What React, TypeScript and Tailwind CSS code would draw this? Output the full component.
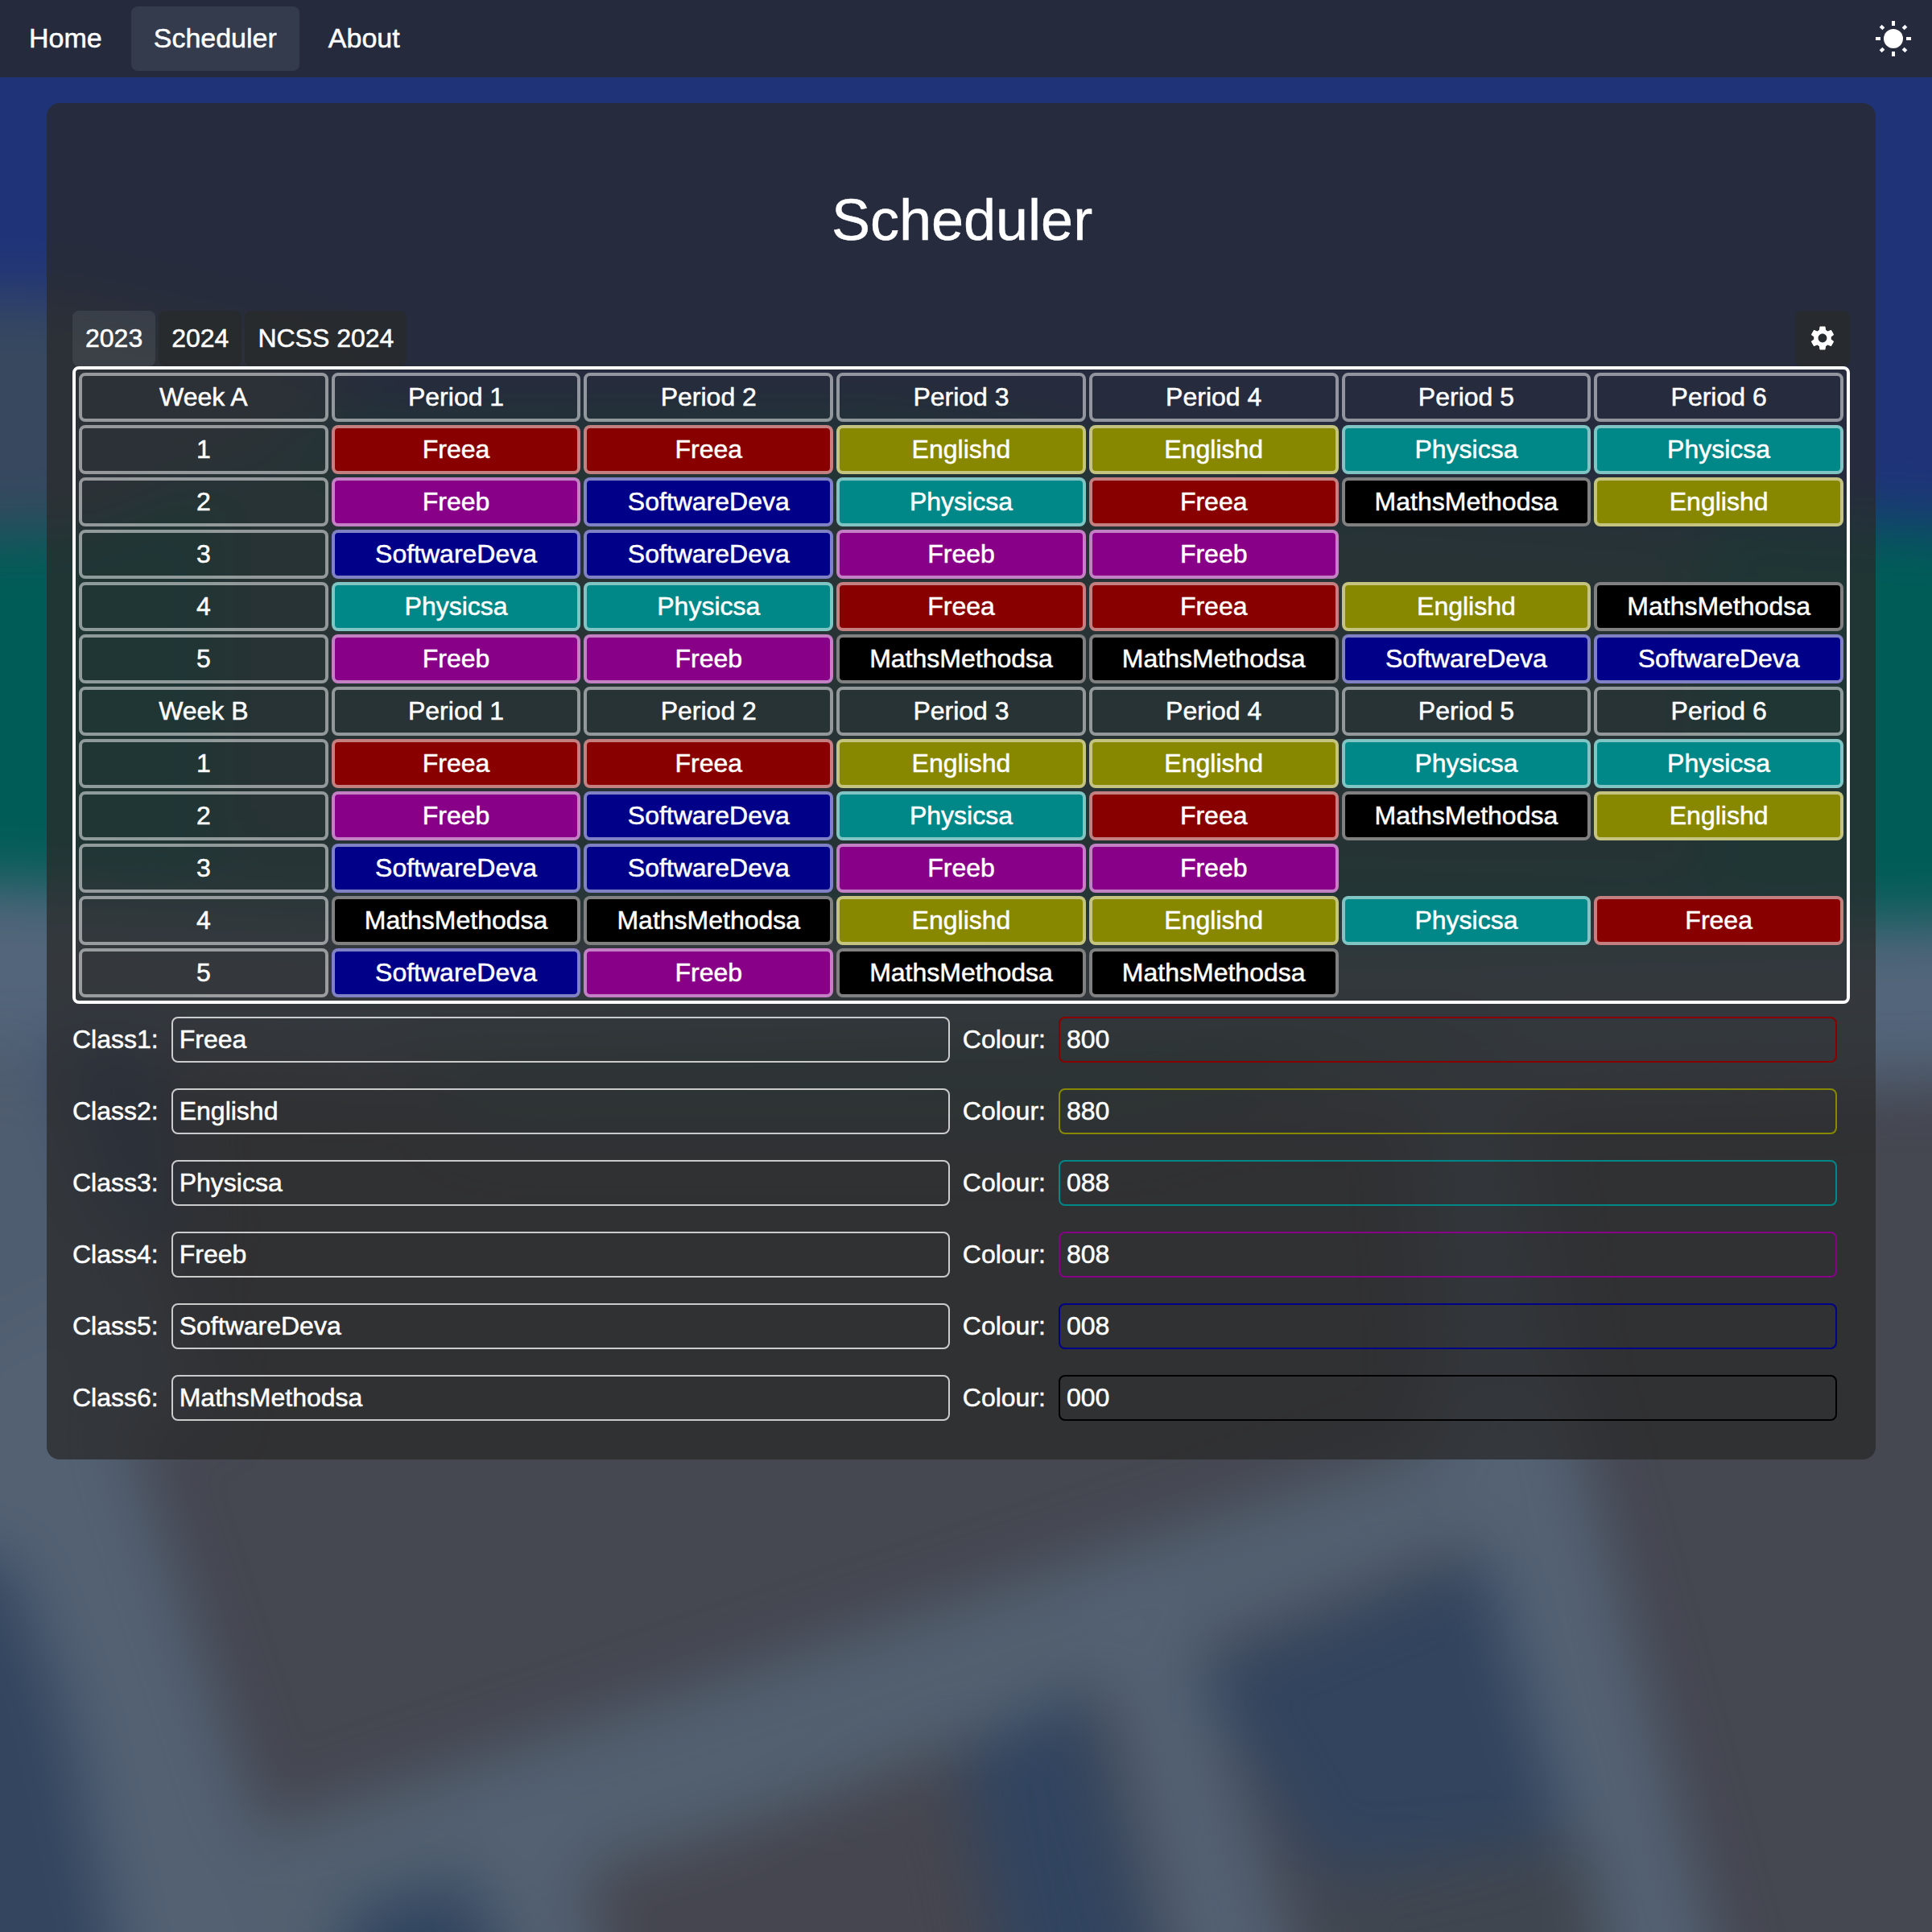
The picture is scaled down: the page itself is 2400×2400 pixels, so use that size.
import React from "react";
import { MdSettings } from "react-icons/md";

const subjects: Record<string, { name: string; fill: string; outline: string }> = {
  F: { name: "Freea", fill: "bg-[#880000]", outline: "border-[#880000]" },
  E: { name: "Englishd", fill: "bg-[#888800]", outline: "border-[#888800]" },
  P: { name: "Physicsa", fill: "bg-[#008888]", outline: "border-[#008888]" },
  B: { name: "Freeb", fill: "bg-[#880088]", outline: "border-[#880088]" },
  S: { name: "SoftwareDeva", fill: "bg-[#000088]", outline: "border-[#000088]" },
  M: { name: "MathsMethodsa", fill: "bg-[#000000]", outline: "border-[#000000]" },
};

const weeks = [
  { label: "Week A", days: ["FFEEPP", "BSPFME", "SSBB--", "PPFFEM", "BBMMSS"] },
  { label: "Week B", days: ["FFEEPP", "BSPFME", "SSBB--", "MMEEPF", "SBMM--"] },
];

const classes = [
  { key: "F", colour: "800" },
  { key: "E", colour: "880" },
  { key: "P", colour: "088" },
  { key: "B", colour: "808" },
  { key: "S", colour: "008" },
  { key: "M", colour: "000" },
];

function Backdrop() {
  return (
    <svg className="absolute inset-0 -z-10 h-full w-full" viewBox="0 0 2400 2400" preserveAspectRatio="none" aria-hidden="true">
      <defs>
        <filter id="soft" x="-400" y="-400" width="3200" height="3200" filterUnits="userSpaceOnUse" colorInterpolationFilters="sRGB">
          <feGaussianBlur stdDeviation="38" />
        </filter>
      </defs>
      <rect width="2400" height="2400" fill="#454751" />
      <g filter="url(#soft)">
        <path d="M-200 -200H2600V800H-200Z" fill="#1f3379" />
        <path d="M-200 370L60 365L420 440L420 760H-200Z" fill="#37485f" />
        <path d="M-200 1000H1300L2600 1080V1335L1300 1370L-200 1300Z" fill="#53657a" />
        <path d="M-200 670L120 660L420 520L1100 520L1700 610L2600 665V1140L1500 1160L-200 1090Z" fill="#005c57" />
        <path d="M260 560L2120 640L2120 1100L260 1080Z" fill="#22505a" />
        <path d="M500 1300L1900 1260L1400 1400L600 1400Z" fill="#3a5458" />
        <path d="M-200 1310L100 1320L260 1760L60 1760L-200 1700Z" fill="#4f5d70" />
        <path d="M70 1290L200 1300L240 1560L130 1500Z" fill="#33476a" />
        <path d="M-200 1680L-20 1700L0 1790L-200 1790Z" fill="#3a506a" />
        <path d="M1750 1300H1870L1960 1830L1800 1860Z" fill="#4c5b6b" />
        <path d="M-200 1780L100 1600L310 2240L420 2500H-200Z" fill="#536173" />
        <path d="M260 2295L1820 1780L1900 1895L330 2500Z" fill="#526070" />
        <path d="M590 2230L710 2220L790 2500H640Z" fill="#536173" />
        <path d="M1340 1970L1460 1960L1630 2500H1470Z" fill="#536173" />
        <path d="M1770 1730L1945 1730L2150 2500H2000Z" fill="#546274" />
        <path d="M-200 1900L10 1940L80 2120L160 2500H-200Z" fill="#33455f" />
        <path d="M430 2375L580 2335L640 2500H430Z" fill="#30445f" />
        <path d="M720 2330L1180 2190L1240 2500H770Z" fill="#45464f" />
        <path d="M1195 2180L1345 2100L1450 2500H1260Z" fill="#31445f" />
        <path d="M1490 2075L1845 1935L1950 2290L1640 2330Z" fill="#32445e" />
        <path d="M1640 2340L1970 2290L2010 2500H1660Z" fill="#40464f" />
      </g>
    </svg>
  );
}

function SunIcon() {
  return (
    <svg className="h-12 w-12" viewBox="-24 -24 48 48" fill="white" aria-hidden="true">
      <circle r="12" />
      {[0, 90, 180, 270].map((a) => (
        <rect key={a} x="-2" y="-22" width="4" height="6" transform={`rotate(${a})`} />
      ))}
      {[45, 135, 225, 315].map((a) => (
        <rect key={a} x="-2.1" y="-22.4" width="4.2" height="5.2" transform={`rotate(${a})`} />
      ))}
    </svg>
  );
}

function Cell({ children, fill = "" }: { children: React.ReactNode; fill?: string }) {
  return (
    <div className={`h-[61px] rounded-lg border-4 border-white/50 py-2 text-center ${fill}`}>{children}</div>
  );
}

function Timetable() {
  return (
    <div className="grid grid-cols-7 gap-1 rounded-lg border-4 border-white p-1">
      {weeks.map((week) => (
        <React.Fragment key={week.label}>
          <Cell>{week.label}</Cell>
          {[1, 2, 3, 4, 5, 6].map((p) => (
            <Cell key={p}>Period {p}</Cell>
          ))}
          {week.days.map((day, d) => (
            <React.Fragment key={d}>
              <Cell>{d + 1}</Cell>
              {day.split("").map((code, i) =>
                subjects[code] ? (
                  <Cell key={i} fill={subjects[code].fill}>
                    {subjects[code].name}
                  </Cell>
                ) : (
                  <div key={i} />
                ),
              )}
            </React.Fragment>
          ))}
        </React.Fragment>
      ))}
    </div>
  );
}

function Field({ value, outline }: { value: string; outline: string }) {
  return (
    <input
      type="text"
      defaultValue={value}
      className={`h-[57px] w-0 min-w-0 flex-1 rounded-lg border-2 bg-transparent p-2 outline-none ${outline}`}
    />
  );
}

export default function App() {
  return (
    <div className="relative isolate flex h-[2400px] w-full flex-col overflow-hidden font-['Liberation_Sans',Arial,sans-serif] text-[32px] leading-[37px] text-white [-webkit-text-stroke:0.5px_white]">
      <Backdrop />
      <nav className="flex h-24 items-center gap-2 bg-[#282929]/75 px-2 text-[34px] leading-[39px]">
        <a className="flex h-20 items-center rounded-lg px-7 pb-[2px]">Home</a>
        <a className="flex h-20 items-center rounded-lg bg-[#e8ffff]/8 px-7 pb-[2px]">Scheduler</a>
        <a className="flex h-20 items-center rounded-lg px-7 pb-[2px]">About</a>
        <span className="mr-4 ml-auto">
          <SunIcon />
        </span>
      </nav>
      <main className="mt-8 mr-[70px] ml-[58px] rounded-2xl bg-[#292a2a]/75 p-8">
        <h1 className="py-[72px] pl-[2px] text-center text-[72px] leading-[82px]">Scheduler</h1>
        <div className="flex h-[69px] gap-1">
          <button className="rounded-lg bg-[#f0ffff]/8 px-4">2023</button>
          <button className="rounded-lg bg-[#282b2b]/80 px-4">2024</button>
          <button className="rounded-lg bg-[#282b2b]/80 px-4">NCSS 2024</button>
          <button className="ml-auto rounded-lg bg-[#282b2b]/80 px-4 pb-[2px]">
            <MdSettings size={36} strokeWidth={0} />
          </button>
        </div>
        <Timetable />
        {classes.map(({ key, colour }, i) => (
          <div key={key} className="flex items-center gap-4 py-4 pr-4">
            <label>Class{i + 1}:</label>
            <Field value={subjects[key].name} outline="border-white/75" />
            <label>Colour:</label>
            <Field value={colour} outline={subjects[key].outline} />
          </div>
        ))}
      </main>
    </div>
  );
}
